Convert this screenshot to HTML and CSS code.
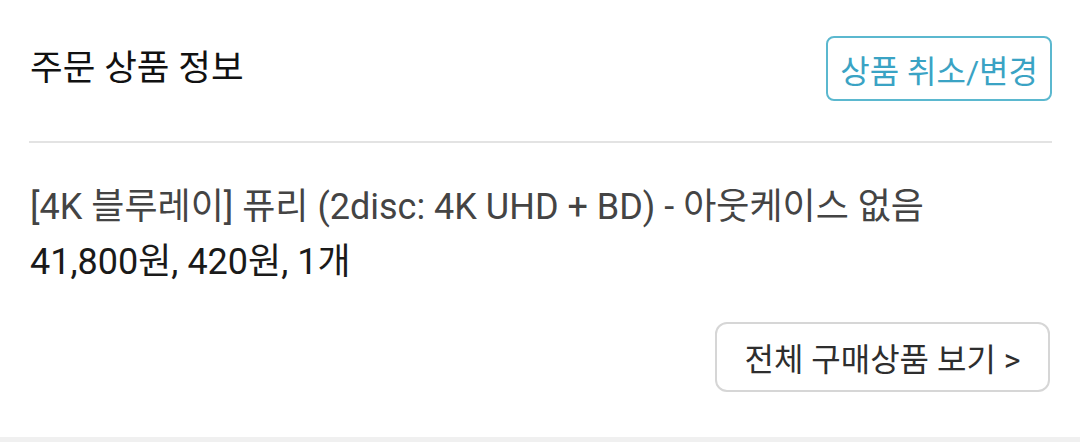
FILE: index.html
```html
<!DOCTYPE html>
<html lang="ko">
<head>
    <meta charset="UTF-8">
    <meta name="viewport" content="width=device-width, initial-scale=1.0">
    <title>주문 상품 정보</title>
    <link rel="stylesheet" href="styles.css">
</head>
<body>
<!-- 주문 상품 정보 영역 -->
<section class="order-items">
    <div class="order-header">
        <h2 class="order-title">주문 상품 정보</h2>
        <button class="btn btn-change">상품 취소/변경</button>
    </div>

    <div class="order-product">
        <p class="product-name">[4K 블루레이] 퓨리 (2disc: 4K UHD + BD) - 아웃케이스 없음</p>
        <p class="product-price">41,800원, 420원, 1개</p>
    </div>

    <div class="order-footer">
        <button class="btn btn-all">전체 구매상품 보기 &gt;</button>
    </div>
</section>
<div class="section-gap"></div>
</body>
</html>
```

FILE: styles.css
```css
body {
    margin: 0;
    padding: 0;
    background-color: #FFFFFF;
    font-family: Roboto, "Noto Sans CJK KR", sans-serif;
    overflow: hidden;
}

.order-items {
    padding: 0 28px 0 29px;
    height: 437px;
    box-sizing: border-box;
}

/* 제목 + 취소/변경 버튼 */
.order-header {
    display: flex;
    justify-content: space-between;
    align-items: center;
    padding: 36px 0 40px 1px;
    border-bottom: 2px solid #E3E3E3;
}

.order-title {
    margin: 0 0 8px 0;
    font-size: 35.5px;
    font-weight: 400;
    color: #111111;
}

.btn {
    font-family: Roboto, "Noto Sans CJK KR", sans-serif;
    background-color: #FFFFFF;
    cursor: pointer;
}

.btn-change {
    height: 65px;
    padding: 0 12px;
    font-size: 32px;
    color: #3AA3C4;
    border: 2px solid #5BB8CF;
    border-radius: 8px;
}

/* 상품 정보 */
.order-product {
    padding: 37px 0 0 1px;
}

.product-name,
.product-price {
    margin: 0;
    font-size: 36px;
    line-height: 55px;
}

.product-name {
    color: #444444;
}

.product-price {
    color: #1A1A1A;
}

.order-footer {
    display: flex;
    justify-content: flex-end;
    padding-top: 32px;
}

.btn-all {
    width: 335px;
    height: 70px;
    font-size: 32px;
    color: #2E2E2E;
    border: 2px solid #D6D6D6;
    border-radius: 12px;
    margin-right: 2px;
}

.section-gap {
    height: 5px;
    background-color: #F0F0F0;
}
```
